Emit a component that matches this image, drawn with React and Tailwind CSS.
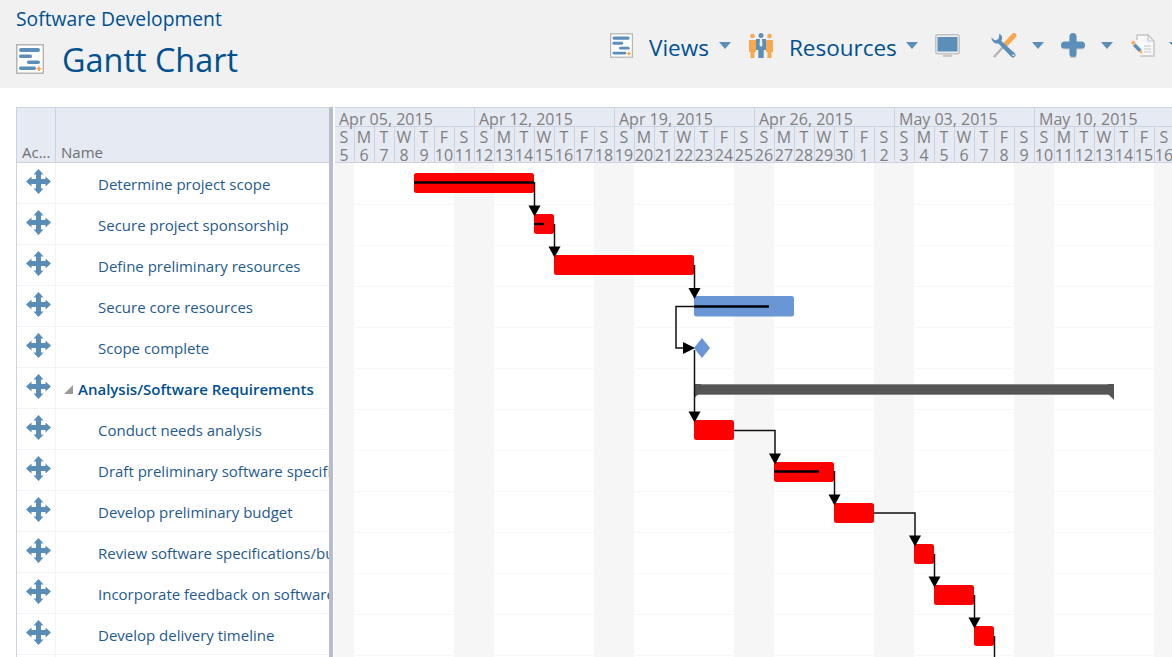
import React from 'react';

const weeks = ['Apr 05, 2015', 'Apr 12, 2015', 'Apr 19, 2015', 'Apr 26, 2015', 'May 03, 2015', 'May 10, 2015'];
const letters = ['S', 'M', 'T', 'W', 'T', 'F', 'S'];

const days = [];
for (let i = 0; i < 42; i++) {
    const num = i < 26 ? i + 5 : i - 25;
    days.push({ letter: letters[i % 7], num, weekend: i % 7 === 0 || i % 7 === 6 });
}

const tasks = [
    { name: 'Determine project scope' },
    { name: 'Secure project sponsorship' },
    { name: 'Define preliminary resources' },
    { name: 'Secure core resources' },
    { name: 'Scope complete' },
    { name: 'Analysis/Software Requirements', summary: true },
    { name: 'Conduct needs analysis' },
    { name: 'Draft preliminary software specifications' },
    { name: 'Develop preliminary budget' },
    { name: 'Review software specifications/budget' },
    { name: 'Incorporate feedback on software specifications' },
    { name: 'Develop delivery timeline' },
    { name: '' },
];

const redBars = [
    [414, 173, 120],
    [534, 214, 20],
    [554, 255, 140],
    [694, 420, 40],
    [774, 462, 60],
    [834, 503, 40],
    [914, 544, 20],
    [934, 585, 40],
    [974, 626, 20],
];

const progress = [
    [414, 534, 182.5],
    [534, 544, 224],
    [694, 769, 306.5],
    [774, 819, 471.5],
];

const links = [
    'M534.5 182V207',
    'M554.5 224V248',
    'M694.5 265V290',
    'M694.5 306.5H676V348H684',
    'M694.5 350V412',
    'M734 430.5H775V456',
    'M834.5 471V496',
    'M874 513H915V538',
    'M934.5 554V579',
    'M974.5 595V620',
    'M994.5 636V657',
];

const arrowsDown = [
    [534.5, 216.5],
    [554.5, 257.5],
    [694.5, 299],
    [694.5, 422.5],
    [775, 464.5],
    [834.5, 505.5],
    [915, 546.5],
    [934.5, 587.5],
    [974.5, 628.5],
];

const GanttIcon = ({ className }) => (
    <svg viewBox="0 0 28 30" className={className}>
        <rect x="0.75" y="0.75" width="26.5" height="28.5" fill="#fff" stroke="#b5b5b5" strokeWidth="1.5" />
        <rect x="3" y="4" width="21" height="4" rx="2" fill="#5b8fb9" />
        <rect x="3" y="10.5" width="13" height="3.5" rx="1.75" fill="#5b8fb9" />
        <rect x="11" y="16.5" width="13" height="3.5" rx="1.75" fill="#5b8fb9" />
        <rect x="3" y="22.5" width="17" height="3.5" rx="1.75" fill="#5b8fb9" />
        <path d="M22 22.5h2v1.5h1.5v1.5H24V27h-2v-1.5h-1.5V24H22z" fill="#f7a94f" />
    </svg>
);

const Caret = ({ className }) => (
    <svg viewBox="0 0 12 7" className={className}>
        <path d="M0 0H12L6 7Z" fill="#5b8fb9" />
    </svg>
);

const PeopleIcon = () => (
    <svg viewBox="0 0 24 25" className="w-6 h-[25px] shrink-0">
        <circle cx="3.5" cy="3" r="2.3" fill="#f7a94f" />
        <circle cx="20.5" cy="3" r="2.3" fill="#f7a94f" />
        <path d="M0 7h7v12H5.500v6h-4v-6H0zM17 7h7v12h-1.500v6h-4v-6H17z" fill="#f7a94f" />
        <circle cx="12" cy="2.5" r="2.5" fill="#5b8fb9" />
        <path d="M7 6h10v11h-2.300v8H9.300v-8H7z" fill="#5b8fb9" />
        <path d="M11 6h2l.5 6-1.500 2-1.500-2z" fill="#f1f1f1" />
    </svg>
);

const MonitorIcon = () => (
    <svg viewBox="0 0 25 23" className="w-[25px] h-[23px] shrink-0">
        <rect x="0.75" y="0.75" width="23.5" height="19" rx="2" fill="#f1f1f1" stroke="#c2c2c2" strokeWidth="1.5" />
        <rect x="2.500" y="3" width="20" height="14.500" fill="#5b8fb9" />
        <rect x="8" y="21" width="9" height="2" fill="#c9c9c9" />
    </svg>
);

const ToolsIcon = () => (
    <svg viewBox="0 0 27 25" className="w-[27px] h-[25px] shrink-0">
        <path d="M3 24L13 13" stroke="#b5b5b5" strokeWidth="2.500" />
        <path d="M14 12L23 2.500" stroke="#f7a94f" strokeWidth="5" strokeLinecap="round" />
        <path d="M8.500 0.500a6 6 0 0 1 1.800 7.500L24 20.500a2.600 2.600 0 0 1-3.600 3.600L7.400 10.600A6 6 0 0 1 0.400 4.500L4 7.600 7.500 6l.6-3.200z" fill="#5b8fb9" />
        <circle cx="22.300" cy="22.300" r="1" fill="#f1f1f1" />
    </svg>
);

const PlusIcon = () => (
    <svg viewBox="0 0 24 25" className="w-6 h-[25px] shrink-0">
        <path d="M8.500 3.500a3.500 3.500 0 0 1 7 0V8.500H20.500a3.500 3.500 0 0 1 0 7H15.500V21.500a3.500 3.500 0 0 1-7 0V15.500H3.500a3.500 3.500 0 0 1 0-7H8.500z" fill="#d0d0d0" transform="translate(0 1)" />
        <path d="M8.500 3.500a3.500 3.500 0 0 1 7 0V8.500H20.500a3.500 3.500 0 0 1 0 7H15.500V20.500a3.500 3.500 0 0 1-7 0V15.500H3.500a3.500 3.500 0 0 1 0-7H8.500z" fill="#5b8fb9" />
    </svg>
);

const DocIcon = () => (
    <svg viewBox="0 0 25 23" className="w-[25px] h-[23px] shrink-0">
        <path d="M7 6V1h11l6 6v15H10" fill="#f8f8f8" stroke="#c4c4c4" strokeWidth="1.400" />
        <path d="M18 1v6h6" fill="none" stroke="#c4c4c4" strokeWidth="1.200" />
        <path d="M14 12h7M14 15h7M14 18h7" stroke="#c4c4c4" strokeWidth="1.200" />
        <path d="M1 9l2.500-2.500 2 2-2.500 2.500z" fill="#f7a94f" />
        <path d="M3 12l2.500-2.500 6 6-2.500 2.500z" fill="#5b8fb9" />
        <path d="M9 18l2.500-2.500 1 4.500z" fill="#f7a94f" />
    </svg>
);

const MoveIcon = () => (
    <svg viewBox="0 0 25 25" className="w-[25px] h-[25px]">
        <path
            d="M12.500 0L17.500 5.500H15V10H19.500V7.500L25 12.500L19.500 17.500V15H15V19.500H17.500L12.500 25L7.500 19.500H10V15H5.500V17.500L0 12.500L5.500 7.500V10H10V5.500H7.500Z"
            fill="#5a8db5"
        />
    </svg>
);

const App = () => {
    return (
        <div className="h-[657px] w-[1172px] overflow-hidden bg-white font-['Open_Sans',sans-serif]">
            <header className="h-[88px] bg-[#f1f1f1] flex pl-4 text-[#00508f]">
                <div className="w-[594px] shrink-0">
                    <div className="text-[19.3px] leading-[24px] pt-[7px]">Software Development</div>
                    <div className="flex items-center mt-[12px]">
                        <GanttIcon className="w-7 h-[30px] shrink-0" />
                        <h1 className="ml-[18px] text-[32.4px] leading-[32px]">Gantt Chart</h1>
                    </div>
                </div>
                <div className="flex items-center h-[35px] mt-[28px] flex-1 overflow-hidden">
                    <GanttIcon className="w-[23px] h-[25px] shrink-0" />
                    <span className="ml-4 text-[22.5px] leading-[30px] mt-[5px]">Views</span>
                    <Caret className="ml-[10px] w-3 h-[7px] shrink-0" />
                    <div className="ml-[18px]"><PeopleIcon /></div>
                    <span className="ml-4 text-[22.5px] leading-[30px] mt-[5px]">Resources</span>
                    <Caret className="ml-[9px] w-3 h-[7px] shrink-0" />
                    <div className="ml-[17px]"><MonitorIcon /></div>
                    <div className="ml-[31px]"><ToolsIcon /></div>
                    <Caret className="ml-[14px] w-3 h-[7px] shrink-0" />
                    <div className="ml-[17px]"><PlusIcon /></div>
                    <Caret className="ml-[16px] w-3 h-[7px] shrink-0" />
                    <div className="ml-[17px]"><DocIcon /></div>
                    <Caret className="ml-[14px] w-3 h-[7px] shrink-0" />
                </div>
            </header>

            <div className="flex ml-4 mt-[19px]">
                <div className="w-[313px] shrink-0 border-l border-[#ccd2e0]">
                    <div className="flex h-[56px] bg-[#e6eaf3] border-t border-b border-[#ccd2e0] text-[15px] text-[#6f6f6f]">
                        <div className="w-[39px] shrink-0 border-r border-[#ccd2e0] flex items-end pl-[5px] leading-[20px]">Ac...</div>
                        <div className="flex-1 flex items-end pl-[5px] leading-[20px]">Name</div>
                    </div>
                    {tasks.map((task, i) => (
                        <div key={i} className="flex h-[41px] border-b border-[#f3f4f6]">
                            <div className="w-[39px] shrink-0 border-r border-[#f3f4f6] flex justify-center pt-[6px] pl-[4px]">
                                {i < 12 && <MoveIcon />}
                            </div>
                            <div className="flex-1 min-w-0 overflow-hidden whitespace-nowrap text-[15px] leading-[20px] text-[#1f5a8c] pt-[11px]">
                                {task.summary ? (
                                    <div className="flex items-center pl-[8px] font-semibold text-[#00508f]">
                                        <svg viewBox="0 0 9 9" className="w-[9px] h-[9px] shrink-0 mr-[5px]">
                                            <path d="M9 0V9H0Z" fill="#9a9a9a" />
                                        </svg>
                                        {task.name}
                                    </div>
                                ) : (
                                    <div className="pl-[42px]">{task.name}</div>
                                )}
                            </div>
                        </div>
                    ))}
                </div>

                <div className="w-1 shrink-0 bg-[#b8bccd]" />

                <div className="w-[840px] shrink-0 ml-[2px]">
                    <div className="h-[56px] bg-[#e6eaf3] border-t border-b border-[#ccd2e0] text-[#7f7f7f] text-[16px]">
                        <div className="flex h-[19px] border-b border-[#ccd2e0]">
                            {weeks.map((week) => (
                                <div key={week} className="w-[140px] shrink-0 border-r border-[#ccd2e0] pl-1 leading-[23px] whitespace-nowrap">
                                    {week}
                                </div>
                            ))}
                        </div>
                        <div className="flex h-[35px]">
                            {days.map((day, i) => (
                                <div key={i} className="w-5 shrink-0 border-r border-[#ccd2e0] flex flex-col items-center pr-px pt-px leading-[18px] whitespace-nowrap">
                                    <div>{day.letter}</div>
                                    <div>{day.num}</div>
                                </div>
                            ))}
                        </div>
                    </div>

                    <div className="relative h-[494px]">
                        <div className="flex h-full -ml-px">
                            {days.map((day, i) => (
                                <div
                                    key={i}
                                    className={day.weekend ? 'w-5 shrink-0 bg-[#f6f6f6] bg-[radial-gradient(#eeeeee_0.5px,transparent_0.6px)] bg-[length:2px_2px]' : 'w-5 shrink-0'}
                                />
                            ))}
                        </div>
                        <svg viewBox="335 163 840 494" className="absolute inset-0 w-[840px] h-[494px]">
                            {tasks.map((task, i) => (
                                <path key={i} d={`M335 ${204.5 + i * 41}H1175`} stroke="#f8f8f8" strokeWidth="1" />
                            ))}
                            {redBars.map(([x, y, w]) => (
                                <rect key={x} x={x} y={y} width={w} height="20" rx="2.500" fill="#ff0000" />
                            ))}
                            <rect x="694" y="296" width="100" height="20.500" rx="2.500" fill="#6a96d6" />
                            <path d="M702 338L710 348L702 358L694 348Z" fill="#6a96d6" />
                            <rect x="694" y="384" width="420" height="11" fill="#8a8a8a" />
                            <rect x="694" y="385" width="420" height="9" fill="#555555" />
                            <path d="M694 384H701V392L694 398Z" fill="#555555" />
                            <path d="M1114 384V400L1108 394V384Z" fill="#555555" />
                            {links.map((d) => (
                                <path key={d} d={d} fill="none" stroke="#111111" strokeWidth="1.500" />
                            ))}
                            {progress.map(([a, b, y]) => (
                                <path key={a} d={`M${a} ${y}H${b}`} stroke="#000" strokeWidth="2.300" />
                            ))}
                            {arrowsDown.map(([x, y]) => (
                                <path key={`${x}-${y}`} d={`M${x} ${y}L${x - 6} ${y - 11}H${x + 6}Z`} fill="#000" />
                            ))}
                            <path d="M695 348L683 342V354Z" fill="#000" />
                        </svg>
                    </div>
                </div>
            </div>
        </div>
    );
};

export default App;
